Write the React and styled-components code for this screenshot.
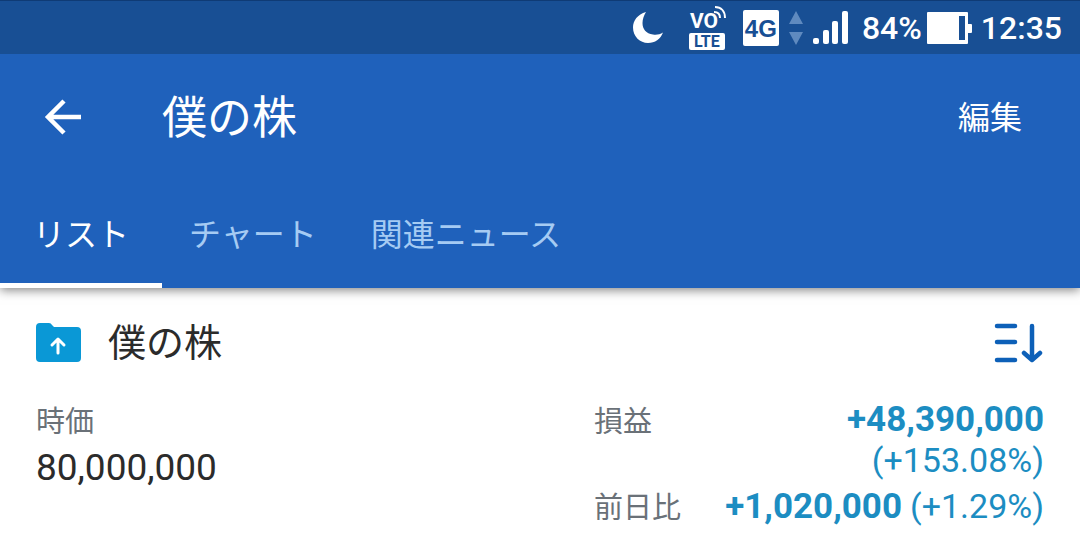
import React, {useState} from 'react'
import styled, {createGlobalStyle} from 'styled-components'

const GlobalStyle = createGlobalStyle`
    * {
        box-sizing: border-box;
    }
    body {
        margin: 0;
        background: #ffffff;
        color: #2b2b2b;
        font-family: Roboto, "Noto Sans CJK JP", sans-serif;
    }
    button {
        margin: 0;
        padding: 0;
        border: 0;
        background: none;
        color: inherit;
        font-family: inherit;
        cursor: pointer;
    }
    svg {
        display: block;
        flex: none;
    }
`

const tabs = ['リスト', 'チャート', '関連ニュース']

function StatusBar() {
    return (
        <StatusWrapper>
            <svg width="32" height="34" viewBox="0 0 32 34" aria-hidden="true">
                <path d="M14 1C5.500 3.500 1 9.500 1 16.500c0 9 7 15.500 15 15.500 7 0 12.500-4 15-10.500C28 23.500 24.500 24 21 23.500 14 22.500 10.500 18 10.500 12c0-4 1.500-8 3.500-11z" fill="#fff"/>
            </svg>
            <VolteIcon>
                <VolteTop>VO</VolteTop>
                <VolteBottom>LTE</VolteBottom>
                <VolteWaves width="14" height="16" viewBox="0 0 14 16" fill="none" stroke="#fff" strokeWidth="2" aria-hidden="true">
                    <path d="M2 1c6 0 10 4 10 11M1 6c4 0 6 2 6 6"/>
                </VolteWaves>
            </VolteIcon>
            <NetworkBadge>4G</NetworkBadge>
            <svg width="14" height="34" viewBox="0 0 14 34" fill="#5f8abf" aria-hidden="true">
                <path d="M7 0l7 13H0zM7 34L0 21h14z"/>
            </svg>
            <Signal width="36" height="34" viewBox="0 0 36 34" fill="#fff" aria-hidden="true">
                <rect x="0" y="27" width="6" height="6" rx="2"/>
                <rect x="10" y="19" width="6" height="14" rx="2"/>
                <rect x="19" y="10" width="6" height="23" rx="2"/>
                <rect x="29" y="0" width="6" height="33" rx="2"/>
            </Signal>
            <StatusText>84%</StatusText>
            <Battery width="46" height="32" viewBox="0 0 46 32" aria-hidden="true">
                <path d="M1 0h39a1 1 0 0 1 1 1v11h3a1 1 0 0 1 1 1v7a1 1 0 0 1-1 1h-3v10a1 1 0 0 1-1 1H1a1 1 0 0 1-1-1V1a1 1 0 0 1 1-1z" fill="#fff"/>
                <path d="M32 4h6v24h-6z" fill="#184f94"/>
            </Battery>
            <StatusText>12:35</StatusText>
        </StatusWrapper>
    )
}

export default function App() {
    const [active, setActive] = useState(0)

    return (
        <>
            <GlobalStyle/>
            <StatusBar/>
            <Header>
                <Toolbar>
                    <BackButton aria-label="戻る">
                        <svg width="38" height="38" viewBox="0 0 38 38" fill="none" stroke="#fff" strokeWidth="4.500" aria-hidden="true">
                            <path d="M37 19H5M20 3L4 19l16 16"/>
                        </svg>
                    </BackButton>
                    <PageTitle>僕の株</PageTitle>
                    <EditButton>編集</EditButton>
                </Toolbar>
                <TabList role="tablist">
                    {tabs.map((label, index) => (
                        <Tab
                            key={label}
                            role="tab"
                            aria-selected={index === active}
                            $active={index === active}
                            onClick={() => setActive(index)}
                        >
                            {label}
                        </Tab>
                    ))}
                </TabList>
            </Header>
            <Content>
                <ListHeader>
                    <svg width="46" height="40" viewBox="0 0 46 40" aria-hidden="true">
                        <path d="M4 0h9q2 0 3 2l2 2h23a4 4 0 0 1 4 4v27a4 4 0 0 1-4 4H4a4 4 0 0 1-4-4V4a4 4 0 0 1 4-4z" fill="#0a98d6"/>
                        <path d="M22 30V17M16 22l6-6 6 6" fill="none" stroke="#fff" strokeWidth="3" strokeLinecap="round" strokeLinejoin="round"/>
                    </svg>
                    <ListTitle>僕の株</ListTitle>
                    <SortButton aria-label="並べ替え">
                        <svg width="50" height="42" viewBox="0 0 50 42" fill="none" stroke="#0d60b8" strokeWidth="4.500" strokeLinecap="round" strokeLinejoin="round" aria-hidden="true">
                            <path d="M3 4h18M3 20h18M3 38h18M38 4v34M30 31l8 7 8-7"/>
                        </svg>
                    </SortButton>
                </ListHeader>
                <Summary>
                    <div>
                        <Label>時価</Label>
                        <MarketValue>80,000,000</MarketValue>
                    </div>
                    <Changes>
                        <ChangeRow>
                            <Label>損益</Label>
                            <Change>
                                <strong>+48,390,000</strong>
                                <span>(+153.08%)</span>
                            </Change>
                        </ChangeRow>
                        <ChangeRow>
                            <Label>前日比</Label>
                            <Change>
                                <strong>+1,020,000</strong>
                                <span>(+1.29%)</span>
                            </Change>
                        </ChangeRow>
                    </Changes>
                </Summary>
            </Content>
        </>
    )
}

const StatusWrapper = styled.div`
    position: relative;
    z-index: 1;
    display: flex;
    align-items: center;
    justify-content: flex-end;
    height: 54px;
    padding: 0 18px;
    border-top: 1px solid #0f3b75;
    background: #184f94;
    color: #ffffff;
`

const VolteIcon = styled.div`
    position: relative;
    width: 38px;
    margin: 0 16px 0 25px;
    padding-top: 4px;
    font-weight: 700;
`

const VolteTop = styled.div`
    padding-left: 1px;
    font-size: 21px;
    line-height: 23px;
`

const VolteBottom = styled.div`
    width: 36px;
    height: 17px;
    border-radius: 2px;
    background: #ffffff;
    color: #184f94;
    font-size: 16px;
    line-height: 18px;
    text-align: center;
`

const VolteWaves = styled.svg`
    position: absolute;
    top: 0;
    right: 0;
`

const NetworkBadge = styled.div`
    width: 36px;
    height: 36px;
    margin-right: 10px;
    border-radius: 2px;
    background: #ffffff;
    color: #184f94;
    font-family: "Liberation Sans", sans-serif;
    font-size: 24px;
    font-weight: 700;
    line-height: 37px;
    text-align: center;
`

const Signal = styled.svg`
    margin: 0 13px 0 10px;
`

const StatusText = styled.span`
    font-size: 32px;
    font-weight: 500;
    line-height: 38px;
`

const Battery = styled.svg`
    margin: 0 8px 0 5px;
`

const Header = styled.header`
    background: #1f61bb;
    color: #ffffff;
    box-shadow: 0 2px 10px rgba(0, 0, 0, 0.5);
`

const Toolbar = styled.div`
    display: flex;
    align-items: center;
    height: 126px;
    padding: 0 58px 0 44px;
`

const BackButton = styled.button`
    margin-right: 80px;
`

const PageTitle = styled.h1`
    flex: 1;
    margin: 0;
    padding-top: 4px;
    font-size: 45px;
    font-weight: 400;
    line-height: 60px;
`

const EditButton = styled.button`
    padding-top: 2px;
    font-size: 32px;
    line-height: 48px;
`

const TabList = styled.div`
    display: flex;
    height: 108px;
`

const Tab = styled.button`
    min-width: 162px;
    padding: 2px 27px 0;
    border-top: 5px solid transparent;
    border-bottom: 5px solid ${props => props.$active ? '#ffffff' : 'transparent'};
    color: ${props => props.$active ? '#ffffff' : '#a5cbf3'};
    font-size: 32px;
    line-height: 48px;
`

const Content = styled.main`
    padding: 26px 36px 0;
`

const ListHeader = styled.div`
    display: flex;
    align-items: center;
    height: 58px;
`

const ListTitle = styled.h2`
    flex: 1;
    margin: 0 0 0 26px;
    font-size: 38px;
    font-weight: 400;
    line-height: 56px;
`

const SortButton = styled.button`
    flex: none;
`

const Summary = styled.div`
    display: flex;
    justify-content: space-between;
    padding-top: 28px;
`

const Label = styled.div`
    padding-top: 2px;
    color: #6a7178;
    font-size: 29px;
    line-height: 40px;
`

const MarketValue = styled.div`
    margin-top: 4px;
    font-size: 37px;
    line-height: 44px;
`

const Changes = styled.div`
    width: 450px;
`

const ChangeRow = styled.div`
    display: flex;
    justify-content: space-between;
    margin-bottom: 6px;
`

const Change = styled.div`
    display: flex;
    flex-wrap: wrap;
    align-items: baseline;
    justify-content: flex-end;
    column-gap: 8px;
    max-width: 320px;
    color: #1c8dc2;
    font-size: 34px;
    line-height: 40px;

    strong {
        font-size: 35px;
    }
`
